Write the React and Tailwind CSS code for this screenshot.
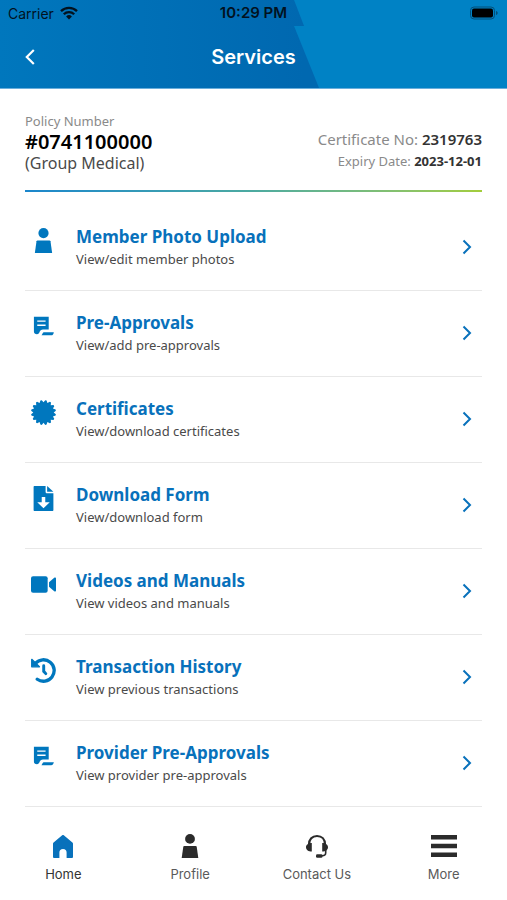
function WifiIcon() {
  return (
    <svg viewBox="0 0 18 14" className="h-3.5 w-4.5" fill="none" stroke="currentColor" strokeWidth="2.3" aria-hidden>
      <path d="M1 5.1a11.4 11.4 0 0 1 16 0" />
      <path d="M3.8 8.2a7.4 7.4 0 0 1 10.4 0" />
      <path d="M9 13.4 6.1 10.5a4.1 4.1 0 0 1 5.8 0z" fill="currentColor" stroke="none" />
    </svg>
  );
}

function BatteryIcon() {
  return (
    <svg viewBox="0 0 30 14" className="h-3.5 w-7.5" aria-hidden>
      <rect x="1.5" y="1" width="24" height="12" rx="3.5" fill="none" stroke="#03507a" strokeWidth="1" />
      <rect x="3" y="2.5" width="21" height="9" rx="2" fill="#000" />
      <path d="M27 5v4c1-.3 1.7-1 1.7-2S28 5.3 27 5z" fill="#03507a" />
    </svg>
  );
}

function ChevronLeft() {
  return (
    <svg viewBox="0 0 10 16" className="h-4 w-2.5" fill="none" stroke="currentColor" strokeWidth="2.2" aria-hidden>
      <path d="M8.8 1 1.8 8l7 7" />
    </svg>
  );
}

function ChevronRight() {
  return (
    <svg viewBox="0 0 10 16" className="h-4 w-2.5 shrink-0" fill="none" stroke="currentColor" strokeWidth="2" aria-hidden>
      <path d="m1.5 1.5 6.5 6.5-6.5 6.5" />
    </svg>
  );
}

function PersonIcon({ className }) {
  return (
    <svg viewBox="0 0 24 24" className={className} fill="currentColor" aria-hidden>
      <circle cx="12" cy="4.9" r="4.9" />
      <path d="M6.3 12h11.4c.5 0 .9.3 1 .8L20.3 24H3.7l1.6-11.2c.1-.5.5-.8 1-.8z" />
    </svg>
  );
}

function ApprovalIcon({ className }) {
  return (
    <svg viewBox="0 0 24 24" className={className} fill="none" aria-hidden>
      <path
        d="M2.8 2.6H17v12.2h-5.500c-1.800 0-2.800 1-3.200 2.300-.4 1.200-1.200 2.300-2.600 2.300-1.700 0-2.900-1-2.900-2.700z"
        fill="currentColor"
      />
      <path d="M6 6.800h8M6 10.800h8" stroke="#fff" strokeWidth="1.3" />
      <path d="M12.1 17.4h9.800c-.2 1.900-1 3-2.600 3H10c1-.6 1.200-3 2.100-3z" fill="currentColor" />
    </svg>
  );
}

// sixteen blunt teeth around the seal, each with a flat tip and a narrow notch
const sealPoints = Array.from({ length: 16 }, (_, i) => {
  const at = (radius, turn) => {
    const angle = ((i + turn) * Math.PI) / 8;
    return `${(12 + radius * Math.sin(angle)).toFixed(2)},${(12 - radius * Math.cos(angle)).toFixed(2)}`;
  };
  return `${at(9.8, 0)} ${at(12, 0.36)} ${at(12, 0.64)}`;
}).join(" ");

function BadgeIcon({ className }) {
  return (
    <svg viewBox="0 0 24 24" className={className} fill="currentColor" aria-hidden>
      <polygon points={sealPoints} />
    </svg>
  );
}

function DownloadIcon({ className }) {
  return (
    <svg viewBox="0 0 24 24" className={className} aria-hidden>
      <path
        d="M3.5 0H14v5.500c0 .9.600 1.500 1.500 1.500h6v16c0 .6-.4 1-1 1h-17c-.6 0-1-.4-1-1V1c0-.6.4-1 1-1z"
        fill="currentColor"
      />
      <path d="M15.5 0 21.5 5.6h-6z" fill="currentColor" />
      <path d="M10.3 10.500h3.400v5h4.300L12 21.400l-6-5.900h4.300z" fill="#fff" />
    </svg>
  );
}

function VideoIcon({ className }) {
  return (
    <svg viewBox="0 0 24 24" className={className} fill="currentColor" aria-hidden>
      <rect x="0" y="4" width="16" height="16" rx="2" />
      <path d="m17.3 9.8 5-4.3c.7-.6 1.700-.2 1.700.7v11.600c0 .9-1 1.300-1.700.7l-5-4.300z" />
    </svg>
  );
}

function HistoryIcon({ className }) {
  return (
    <svg viewBox="0 0 24 24" className={className} fill="none" stroke="currentColor" strokeLinecap="round" aria-hidden>
      <path d="M4.2 5.2A10.3 10.3 0 1 1 6 20.4" strokeWidth="3.2" />
      <path d="M.7 1.3v7.200h7.400z" fill="currentColor" strokeWidth="1.3" strokeLinejoin="round" />
      <path d="M12.2 7.5v5.300l2 2.200" strokeWidth="2.8" />
    </svg>
  );
}

function HomeIcon({ className }) {
  return (
    <svg viewBox="0 0 24 24" className={className} fill="currentColor" aria-hidden>
      <path d="M11.2 1.3c.5-.4 1.100-.4 1.600 0l8.600 7.200c.4.300.6.700.6 1.200V23a1 1 0 0 1-1 1h-5.400v-5.500a3.600 3.600 0 0 0-7.200 0V24H3a1 1 0 0 1-1-1V9.700c0-.5.200-.9.600-1.200z" />
    </svg>
  );
}

function HeadsetIcon({ className }) {
  return (
    <svg viewBox="0 0 24 24" className={className} fill="none" stroke="currentColor" aria-hidden>
      <path d="M4 10.500C4 5.400 7.200 2 12 2s8 3.400 8 8.500" strokeWidth="2.2" />
      <path d="M6.8 9v8.600C3.500 17.600 1 16 1 13.300S3.500 9 6.800 9zM17.2 9v8.600c3.300 0 5.800-1.600 5.800-4.300S20.500 9 17.200 9z" fill="currentColor" stroke="none" />
      <path d="M20.7 15.500v3.300c0 2.200-1.400 3-3.500 3H15" strokeWidth="1.6" />
      <rect x="11" y="20.3" width="6.5" height="3.5" rx="1.3" fill="currentColor" stroke="none" />
    </svg>
  );
}

function MenuIcon({ className }) {
  return (
    <svg viewBox="0 0 28 24" className={className} fill="currentColor" aria-hidden>
      <path d="M1 1h26v4.600H1zM1 9.700h26v4.600H1zM1 18.400h26V23H1z" />
    </svg>
  );
}

const services = [
  { title: "Member Photo Upload", text: "View/edit member photos", icon: PersonIcon },
  { title: "Pre-Approvals", text: "View/add pre-approvals", icon: ApprovalIcon },
  { title: "Certificates", text: "View/download certificates", icon: BadgeIcon },
  { title: "Download Form", text: "View/download form", icon: DownloadIcon },
  { title: "Videos and Manuals", text: "View videos and manuals", icon: VideoIcon },
  { title: "Transaction History", text: "View previous transactions", icon: HistoryIcon },
  { title: "Provider Pre-Approvals", text: "View provider pre-approvals", icon: ApprovalIcon },
];

const tabs = [
  { label: "Home", icon: HomeIcon, iconClass: "h-6 w-6 text-[#0871bb]", active: true },
  { label: "Profile", icon: PersonIcon, iconClass: "h-6 w-6" },
  { label: "Contact Us", icon: HeadsetIcon, iconClass: "h-6 w-6" },
  { label: "More", icon: MenuIcon, iconClass: "h-6 w-7" },
];

function Header() {
  return (
    <header className="font-[Inter,sans-serif]">
      <div className="relative isolate grid h-[26px] grid-cols-[1fr_auto_1fr] items-center bg-linear-to-r from-[#0077bd] to-[#0068b0] to-60% px-2 text-[14px] text-[#02121f]">
        <div
          className="absolute inset-y-0 right-0 left-[58%] -z-10 bg-[#0082c5] [clip-path:polygon(0_0,100%_0,100%_100%,10px_100%)]"
          aria-hidden
        />
        <span className="flex items-center gap-1.5">
          Carrier <WifiIcon />
        </span>
        <span className="text-[15px] font-semibold">10:29 PM</span>
        <span className="flex justify-end">
          <BatteryIcon />
        </span>
      </div>
      <div className="relative isolate grid h-[63px] grid-cols-[1fr_auto_1fr] items-center border-b border-[#6aaedb] bg-linear-to-r from-[#0077bd] to-[#0068b0] to-60% px-[25px] text-white">
        <div
          className="absolute inset-y-0 right-0 left-[58%] -z-10 bg-[#0082c5] [clip-path:polygon(0_0,100%_0,100%_100%,25px_100%)]"
          aria-hidden
        />
        <button type="button" aria-label="Back" className="flex h-8 w-8 items-center">
          <ChevronLeft />
        </button>
        <h1 className="text-[20px] font-semibold">Services</h1>
      </div>
    </header>
  );
}

function App() {
  return (
    <div className="flex min-h-screen flex-col bg-white font-['Noto_Sans',sans-serif]">
      <Header />

      <main className="flex-1 px-[25px] pt-[22px]">
        <section className="flex items-end justify-between pb-[17px]">
          <div>
            <p className="text-[13px] leading-5 text-[#8a8a8a]">Policy Number</p>
            <p className="text-[20px] leading-[22px] font-semibold text-black">#0741100000</p>
            <p className="text-[16px] leading-5 text-[#4a4a4a]">(Group Medical)</p>
          </div>
          <div className="pb-px text-right text-[#8a8a8a]">
            <p className="text-[15px] leading-[22px]">
              Certificate No: <span className="font-semibold text-[#333]">2319763</span>
            </p>
            <p className="text-[13px] leading-[22px]">
              Expiry Date: <span className="font-bold text-[#333]">2023-12-01</span>
            </p>
          </div>
        </section>
        <div className="h-0.5 bg-linear-to-r from-[#1b86cc] via-[#4caaa0] to-[#a3cd3a]" />

        <ul className="pt-[13px]">
          {services.map(({ title, text, icon: ServiceIcon }) => (
            <li key={title} className="border-b border-[#e8e8e8]">
              <a href="#" className="flex h-[85px] items-center pr-2.5 pb-0.5 pl-1.5">
                <ServiceIcon className="mt-[23px] h-[25px] w-[25px] shrink-0 self-start text-[#0077be]" />
                <span className="ml-5 flex-1">
                  <span className="block text-[17px] leading-[25px] font-bold text-[#0871bb]">{title}</span>
                  <span className="block text-[13px] leading-5 text-[#4a4a4a]">{text}</span>
                </span>
                <span className="text-[#0871bb]">
                  <ChevronRight />
                </span>
              </a>
            </li>
          ))}
        </ul>
      </main>

      <nav className="grid grid-cols-4 pt-[26px] pb-4 font-[Inter,sans-serif]">
        {tabs.map(({ label, icon: TabIcon, iconClass, active }) => (
          <a
            key={label}
            href="#"
            aria-current={active ? "page" : undefined}
            className="flex flex-col items-center gap-1.5 text-[#2b2b2b]"
          >
            <TabIcon className={iconClass} />
            <span className={active ? "text-[13px] leading-5 text-[#333]" : "text-[13px] leading-5 text-[#5a5a5a]"}>
              {label}
            </span>
          </a>
        ))}
      </nav>
    </div>
  );
}

export default App;
